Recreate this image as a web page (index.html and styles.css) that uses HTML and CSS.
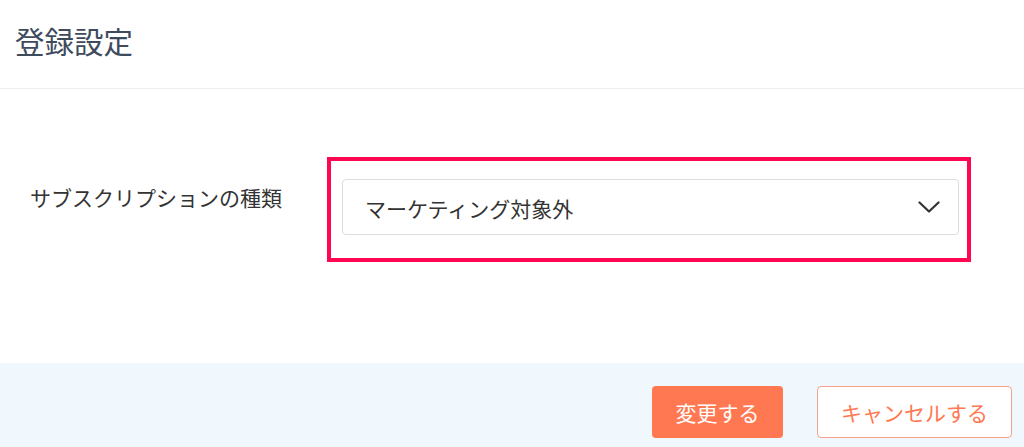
FILE: index.html
```html
<!DOCTYPE html>
<html lang="ja">
<head>
    <meta charset="UTF-8">
    <meta name="viewport" content="width=device-width, initial-scale=1.0">
    <title>登録設定</title>
    <link rel="stylesheet" href="styles.css">
</head>
<body>
    <div class="modal">
        <div class="modal-header">
            <h1>登録設定</h1>
        </div>
        <div class="modal-body">
            <div class="form-row">
                <label class="form-label" for="subscriptionType">サブスクリプションの種類</label>
                <div class="highlight">
                    <div class="select-box" id="subscriptionType">
                        <span class="select-value">マーケティング対象外</span>
                        <svg class="select-arrow" width="22" height="12" viewBox="0 0 22 12">
                            <path d="M1.5 1.5 L11 10.5 L20.5 1.5" fill="none" stroke="#333" stroke-width="2.2" stroke-linecap="round" stroke-linejoin="round"/>
                        </svg>
                    </div>
                </div>
            </div>
        </div>
        <div class="modal-footer">
            <button type="button" class="btn btn-primary">変更する</button>
            <button type="button" class="btn btn-outline">キャンセルする</button>
        </div>
    </div>
</body>
</html>
```

FILE: styles.css
```css
body {
    margin: 0;
    padding: 0;
    font-family: "Noto Sans CJK JP", "Noto Sans", sans-serif;
    background-color: #fff;
    color: #333;
}

.modal {
    width: 1024px;
    height: 447px;
    display: flex;
    flex-direction: column;
}

.modal-header {
    height: 89px;
    border-bottom: 1px solid #eeeeee;
    padding: 0 15px;
    box-sizing: border-box;
    display: flex;
    align-items: center;
}

.modal-header h1 {
    margin: 0 0 8px 0;
    font-size: 29.5px;
    font-weight: normal;
    color: #3e4b5d;
}

.modal-body {
    height: 274px;
    box-sizing: border-box;
    padding: 68px 0 0 30px;
}

.form-row {
    display: flex;
    align-items: flex-start;
}

.form-label {
    width: 297px;
    font-size: 21px;
    color: #333;
    margin-top: 25px;
    line-height: 30px;
}

.highlight {
    width: 644px;
    height: 105px;
    box-sizing: border-box;
    border: 4px solid #ff0652;
    padding: 18px 8px 0 11px;
}

.select-box {
    height: 56px;
    box-sizing: border-box;
    border: 1px solid #dddddd;
    border-radius: 4px;
    display: flex;
    align-items: center;
    justify-content: space-between;
    padding: 0 18px 0 22px;
}

.select-value {
    font-size: 21px;
    color: #333;
    margin-top: 2px;
}

.select-arrow {
    display: block;
}

.modal-footer {
    flex: 1;
    background-color: #f0f8fe;
    display: flex;
    justify-content: flex-end;
    align-items: flex-start;
    gap: 34px;
    padding: 23px 12px 0 0;
}

.btn {
    height: 52px;
    border-radius: 4px;
    font-family: inherit;
    font-size: 21px;
    cursor: pointer;
    box-sizing: border-box;
}

.btn-primary {
    width: 131px;
    background-color: #ff7852;
    color: #fff;
    border: none;
}

.btn-outline {
    width: 195px;
    background-color: #fff;
    color: #ff7852;
    border: 1px solid #f5a088;
}
```
